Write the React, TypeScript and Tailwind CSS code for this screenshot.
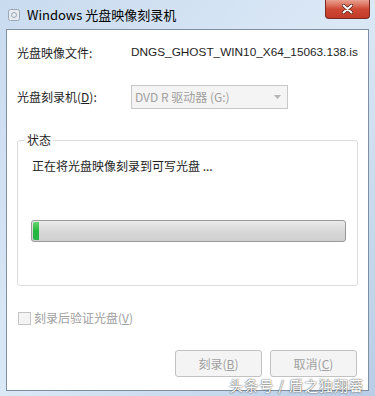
import React from 'react'

const cjk = { fontFamily: '"Noto Sans CJK SC", "Noto Sans", sans-serif' }

export default function App() {
  return (
    <div className="relative w-[375px] h-[396px] overflow-hidden bg-gradient-to-br from-[#c9dbef] via-[#dbe8f6] to-[#b8cde6] text-[12px] text-[#1e1e1e]" style={cjk}>
      {/* title bar */}
      <div className="flex items-center h-[29px] pl-[8px] gap-[7px]">
        <svg width="12" height="12" viewBox="0 0 12 12">
          <rect x="0.5" y="0.5" width="11" height="11" rx="2" fill="#e6ecf2" stroke="#9aa6b2" />
          <circle cx="6" cy="6" r="2.5" fill="none" stroke="#9aa6b2" />
        </svg>
        <span className="text-[13px] text-black leading-none">Windows 光盘映像刻录机</span>
      </div>
      <div className="absolute top-0 right-[5px] w-[45px] h-[19px] rounded-b-[4px] border border-t-0 border-[#7a2a22] bg-gradient-to-b from-[#e8a090] via-[#cf4a36] to-[#c23a28] flex items-center justify-center">
        <svg width="11" height="10" viewBox="0 0 11 10">
          <path d="M1.5 1.5 L9.5 8.5 M9.5 1.5 L1.5 8.5" stroke="#4a1a14" strokeWidth="3.4" strokeLinecap="round" />
          <path d="M1.5 1.5 L9.5 8.5 M9.5 1.5 L1.5 8.5" stroke="#ffffff" strokeWidth="2" strokeLinecap="round" />
        </svg>
      </div>

      {/* client area */}
      <div className="relative ml-[6px] w-[363px] h-[362px] border border-[#7f8fa3] bg-white">
        <div className="flex items-center pl-[10px] pt-[14px] h-[30px] mt-[1px]">
          <span className="w-[114px] shrink-0">光盘映像文件:</span>
          <span className="whitespace-nowrap text-[11.8px]" style={{ fontFamily: '"Liberation Sans", Arial, sans-serif' }}>
            DNGS_GHOST_WIN10_X64_15063.138.is
          </span>
        </div>

        <div className="flex items-center pl-[10px] mt-[24px]">
          <span className="w-[114px] shrink-0">
            光盘刻录机(<span className="underline">D</span>):
          </span>
          <div className="flex items-center justify-between w-[157px] h-[24px] border border-[#c8c8c8] bg-[#f4f4f4] pl-[3px] pr-[6px] text-[#a0a0a0]">
            <span className="text-[12px]">DVD R 驱动器 (G:)</span>
            <svg width="7" height="4" viewBox="0 0 7 4">
              <path d="M0 0 L7 0 L3.5 4 Z" fill="#b4b4b4" />
            </svg>
          </div>
        </div>

        {/* group box */}
        <div className="relative mx-[10px] mt-[31px] h-[146px] border border-[#dcdcdc] rounded-[3px]">
          <span className="absolute -top-[9px] left-[7px] bg-white px-[2px] leading-[16px]">状态</span>
          <div className="pl-[14px] pt-[17px] leading-[16px]">正在将光盘映像刻录到可写光盘 ...</div>
          <div className="ml-[13px] mt-[46px] w-[315px] h-[22px] border border-[#9a9a9a] rounded-[3px] bg-gradient-to-b from-[#ebebeb] via-[#d8d8d8] to-[#cfcfcf] p-[1px] flex">
            <div className="w-[6px] h-full rounded-l-[2px] bg-gradient-to-b from-[#5fd36a] via-[#22b83a] to-[#2bb54a]" />
          </div>
        </div>

        {/* checkbox */}
        <div className="flex items-center pl-[11px] mt-[24px] text-[#a0a0a0] gap-[3px]">
          <span className="w-[13px] h-[13px] border border-[#c4c4c4] bg-[#f4f4f4]" />
          <span className="leading-[16px]">
            刻录后验证光盘(<span className="underline">V</span>)
          </span>
        </div>

        {/* buttons */}
        <div className="flex justify-end gap-[8px] pr-[11px] mt-[24px]">
          <div className="w-[87px] h-[27px] border border-[#c2c2c2] rounded-[3px] bg-[#f4f4f4] flex items-center justify-center text-[#a0a0a0]">
            刻录(<span className="underline">B</span>)
          </div>
          <div className="w-[87px] h-[27px] border border-[#c2c2c2] rounded-[3px] bg-[#f4f4f4] flex items-center justify-center text-[#a0a0a0]">
            取消(<span className="underline">C</span>)
          </div>
        </div>

        <div className="absolute right-[4px] bottom-[-2px] text-[14px] text-white leading-none tracking-[1px]" style={{ textShadow: '0 0 2px #666, 0 0 1px #444' }}>
          头条号 / 盾之独翔蕃
        </div>
      </div>
    </div>
  )
}
